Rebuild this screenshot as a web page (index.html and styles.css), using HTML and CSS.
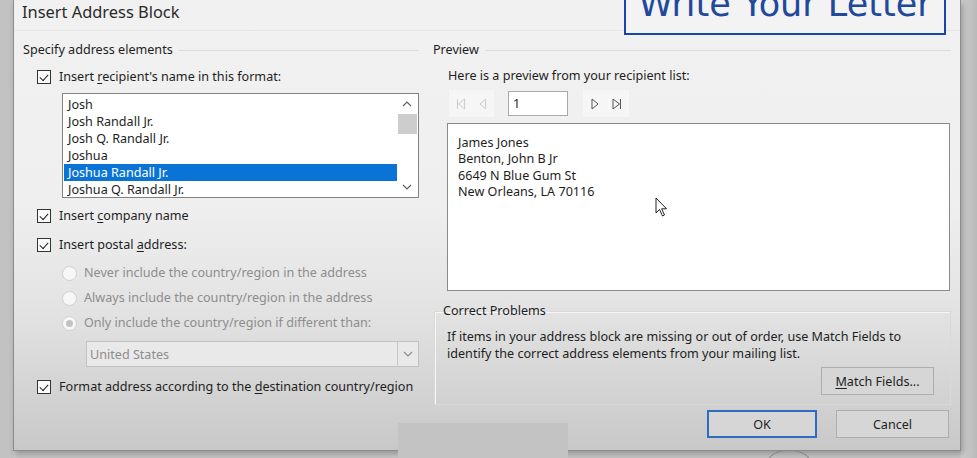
FILE: index.html
```html
<!DOCTYPE html>
<html lang="en">

<head>
    <meta charset="UTF-8">
    <meta name="viewport" content="width=device-width, initial-scale=1.0">
    <title>Insert Address Block</title>
    <link rel="stylesheet" href="styles.css">
</head>

<body>
    <div class="screen">

        <!-- Dialog -->
        <div class="dialog">
            <div class="titlebar">Insert Address Block</div>

            <div class="content">
                <!-- Linkerkolom -->
                <div class="col-left">
                    <div class="legend"><span>Specify address elements</span></div>

                    <div class="check row-name">
                        <span class="box checked"></span>
                        <span>Insert <u>r</u>ecipient's name in this format:</span>
                    </div>

                    <div class="listbox">
                        <div class="items">
                            <div class="item">Josh</div>
                            <div class="item">Josh Randall Jr.</div>
                            <div class="item">Josh Q. Randall Jr.</div>
                            <div class="item">Joshua</div>
                            <div class="item selected">Joshua Randall Jr.</div>
                            <div class="item">Joshua Q. Randall Jr.</div>
                        </div>
                        <div class="scrollbar">
                            <svg width="12" height="8" viewBox="0 0 12 8"><path d="M2 6 L6 2 L10 6" fill="none" stroke="#606060" stroke-width="1.2"/></svg>
                            <div class="thumb"></div>
                            <div class="spacer"></div>
                            <svg width="12" height="8" viewBox="0 0 12 8"><path d="M2 2 L6 6 L10 2" fill="none" stroke="#606060" stroke-width="1.2"/></svg>
                        </div>
                    </div>

                    <div class="check row-company">
                        <span class="box checked"></span>
                        <span>Insert <u>c</u>ompany name</span>
                    </div>

                    <div class="check row-postal">
                        <span class="box checked"></span>
                        <span>Insert postal <u>a</u>ddress:</span>
                    </div>

                    <div class="radio row-r1">
                        <span class="dot"></span>
                        <span>Never include the country/region in the address</span>
                    </div>
                    <div class="radio row-r2">
                        <span class="dot"></span>
                        <span>Always include the country/region in the address</span>
                    </div>
                    <div class="radio row-r3">
                        <span class="dot on"></span>
                        <span>Only include the country/region if different than:</span>
                    </div>

                    <div class="dropdown">
                        <span class="value">United States</span>
                        <span class="arrow">
                            <svg width="12" height="8" viewBox="0 0 12 8"><path d="M2 2 L6 6 L10 2" fill="none" stroke="#8a8a8a" stroke-width="1.2"/></svg>
                        </span>
                    </div>

                    <div class="check row-format">
                        <span class="box checked"></span>
                        <span>Format address according to the <u>d</u>estination country/region</span>
                    </div>
                </div>

                <!-- Rechterkolom -->
                <div class="col-right">
                    <div class="legend"><span>Preview</span></div>

                    <div class="preview-label">Here is a preview from your recipient list:</div>

                    <div class="nav">
                        <div class="nav-group disabled">
                            <svg width="14" height="16" viewBox="0 0 14 16"><path d="M3.5 3 V13 M11 3 L4.5 8 L11 13 Z" fill="none" stroke="#c9c9c9" stroke-width="1"/></svg>
                            <svg width="14" height="16" viewBox="0 0 14 16"><path d="M10 3 L4 8 L10 13 Z" fill="none" stroke="#c9c9c9" stroke-width="1"/></svg>
                        </div>
                        <div class="nav-input">1</div>
                        <div class="nav-group">
                            <svg width="14" height="16" viewBox="0 0 14 16"><path d="M4 3 L10 8 L4 13 Z" fill="none" stroke="#555" stroke-width="1"/></svg>
                            <svg width="14" height="16" viewBox="0 0 14 16"><path d="M10.5 3 V13 M3 3 L9.5 8 L3 13 Z" fill="none" stroke="#555" stroke-width="1"/></svg>
                        </div>
                    </div>

                    <div class="preview-box">
                        <div>James Jones</div>
                        <div>Benton, John B Jr</div>
                        <div>6649 N Blue Gum St</div>
                        <div>New Orleans, LA 70116</div>
                    </div>

                    <fieldset class="problems">
                        <legend>Correct Problems</legend>
                        <p>If items in your address block are missing or out of order, use Match Fields to identify the correct address elements from your mailing list.</p>
                        <div class="problems-actions">
                            <button class="btn btn-match"><u>M</u>atch Fields...</button>
                        </div>
                    </fieldset>

                    <div class="buttons">
                        <button class="btn btn-ok">OK</button>
                        <button class="btn btn-cancel">Cancel</button>
                    </div>
                </div>
            </div>
        </div>

        <!-- Titel van de video, over de dialoog heen -->
        <div class="banner">Write Your Letter</div>

        <!-- Muisaanwijzer -->
        <svg class="cursor" width="14" height="21" viewBox="0 0 14 21">
            <path d="M1 1 L1 16 L4.5 12.5 L7.5 19 L9.5 18 L6.6 11.8 L11.5 11.8 Z" fill="#fff" stroke="#222" stroke-width="1"/>
        </svg>

        <!-- Stukje achtergrond van de video -->
        <div class="video-block"></div>
        <div class="video-ring"></div>
    </div>
</body>

</html>
```

FILE: styles.css
```css
/* Basisopmaak */
body,
html {
    margin: 0;
    padding: 0;
    overflow: hidden;
    font-family: "Noto Sans", "Open Sans", sans-serif;
    font-size: 12.6px;
    color: #1e1e1e;
}

.screen {
    position: relative;
    width: 977px;
    height: 458px;
    overflow: hidden;
    background: linear-gradient(to right, #c2c2c2 0, #c2c2c2 13px, #c6c6c6 13px, #c6c6c6 960px, #cdcdcd 962px, #b9b9b9 977px);
}

u {
    text-decoration: underline;
    text-underline-offset: 2px;
}

/* Dialoogvenster */
.dialog {
    margin-left: 13px;
    width: 946px;
    height: 450px;
    border-left: 1px solid #8c8c8c;
    border-right: 1px solid #8c8c8c;
    border-bottom: 1px solid #8c8c8c;
    background: linear-gradient(to bottom, #f1f1f1 0%, #efefef 45%, #e2e2e2 70%, #c8c8c8 100%);
    box-shadow: 2px 3px 6px rgba(0, 0, 0, 0.25);
    display: flex;
    flex-direction: column;
}

.titlebar {
    height: 31px;
    padding-left: 8px;
    font-size: 16.4px;
    line-height: 24px;
    color: #2a2a2a;
    border-bottom: 1px solid #e6e6e6;
    box-sizing: border-box;
}

.content {
    display: flex;
    gap: 14px;
    padding: 11px 9px 0 9px;
}

.col-left {
    width: 396px;
    display: flex;
    flex-direction: column;
}

.col-right {
    width: 518px;
    display: flex;
    flex-direction: column;
}

/* Groepskop met lijn */
.legend {
    display: flex;
    align-items: center;
    height: 16px;
    line-height: 16px;
}

.legend::after {
    content: "";
    flex: 1;
    border-top: 1px solid #dcdcdc;
    margin-left: 6px;
}

/* Selectievakjes */
.check,
.radio {
    display: flex;
    align-items: center;
    height: 16px;
    line-height: 16px;
    white-space: nowrap;
}

.check {
    margin-left: 14px;
    gap: 8px;
}

.box {
    width: 12px;
    height: 12px;
    border: 1px solid #333;
    background: #fafafa;
    position: relative;
    flex: none;
}

.box.checked::after {
    content: "";
    position: absolute;
    left: 2px;
    top: 1px;
    width: 7px;
    height: 4px;
    border-left: 1.2px solid #222;
    border-bottom: 1.2px solid #222;
    transform: translate(0, 2px) rotate(-48deg);
    transform-origin: center;
}

.row-name {
    margin-top: 11px;
}

.row-company {
    margin-top: 10px;
}

.row-postal {
    margin-top: 13px;
}

/* Keuzerondjes (uitgeschakeld) */
.radio {
    margin-left: 39px;
    gap: 7px;
    color: #8d8d8d;
}

.dot {
    width: 13px;
    height: 13px;
    border: 1px solid #cfcfcf;
    border-radius: 50%;
    background: #f7f7f7;
    position: relative;
    flex: none;
}

.dot.on::after {
    content: "";
    position: absolute;
    left: 3px;
    top: 3px;
    width: 7px;
    height: 7px;
    border-radius: 50%;
    background: #c3c3c3;
}

.row-r1 {
    margin-top: 12px;
}

.row-r2,
.row-r3 {
    margin-top: 9px;
}

/* Lijst met naamopmaak */
.listbox {
    margin-top: 8px;
    margin-left: 39px;
    width: 357px;
    height: 105px;
    box-sizing: border-box;
    border: 1px solid #828282;
    background: #fff;
    display: flex;
    padding: 2px 1px 2px 1px;
}

.items {
    flex: 1;
}

.item {
    height: 17px;
    line-height: 17px;
    padding-left: 4px;
    white-space: nowrap;
}

.item.selected {
    background: #0a74d6;
    color: #fff;
}

.scrollbar {
    width: 20px;
    display: flex;
    flex-direction: column;
    align-items: center;
    padding-top: 4px;
    box-sizing: border-box;
}

.scrollbar .thumb {
    width: 19px;
    height: 20px;
    background: #cdcdcd;
    margin-top: 6px;
}

.scrollbar .spacer {
    flex: 1;
}

.scrollbar svg:last-child {
    margin-bottom: 4px;
}

/* Landenkeuze (uitgeschakeld) */
.dropdown {
    margin-top: 10px;
    margin-left: 63px;
    width: 333px;
    height: 26px;
    box-sizing: border-box;
    border: 1px solid #c2c2c2;
    background: #e9e9e9;
    display: flex;
    align-items: center;
    color: #8d8d8d;
}

.dropdown .value {
    flex: 1;
    padding-left: 3px;
}

.dropdown .arrow {
    width: 20px;
    height: 24px;
    border-left: 1px solid #c8c8c8;
    display: flex;
    align-items: center;
    justify-content: center;
}

.row-format {
    margin-top: 12px;
}

/* Voorbeeld */
.preview-label {
    margin-top: 10px;
    padding-left: 15px;
    height: 16px;
    line-height: 16px;
}

.nav {
    margin-top: 6px;
    padding-left: 16px;
    display: flex;
    align-items: center;
    height: 27px;
}

.nav-group {
    height: 27px;
    display: flex;
    align-items: center;
    gap: 8px;
    padding: 0 5px 0 5px;
    background: #f6f6f6;
}

.nav-group.disabled {
    width: 35px;
}

.nav-input {
    margin: 0 15px 0 14px;
    width: 60px;
    height: 25px;
    box-sizing: border-box;
    border: 1px solid #a9a9a9;
    background: #fff;
    line-height: 23px;
    padding-left: 4px;
}

.preview-box {
    margin-top: 6px;
    margin-left: 14px;
    width: 503px;
    height: 168px;
    box-sizing: border-box;
    border: 1px solid #8a8a8a;
    background: #fff;
    padding: 11px 0 0 10px;
    line-height: 16.4px;
}

/* Problemen oplossen */
.problems {
    margin: 12px 0 0 1px;
    width: 517px;
    height: 102px;
    box-sizing: border-box;
    border: 1px solid #d9d9d9;
    box-shadow: inset 1px 1px 0 #f6f6f6;
    padding: 0 16px 0 12px;
}

.problems legend {
    padding: 0 3px 0 0;
    margin-left: -4px;
    line-height: 16px;
}

.problems p {
    margin: 9px 0 0 0;
    line-height: 17px;
}

.problems-actions {
    display: flex;
    justify-content: flex-end;
    margin-top: 5px;
}

/* Knoppen */
.btn {
    font-family: inherit;
    font-size: 12.6px;
    color: #1e1e1e;
    height: 28px;
    box-sizing: border-box;
    border: 1px solid #adadad;
    background: #d6d6d6;
    padding: 0;
}

.btn-match {
    width: 113px;
}

.buttons {
    display: flex;
    justify-content: flex-end;
    gap: 19px;
    margin-top: 5px;
    padding-right: 2px;
}

.btn-ok {
    width: 110px;
    border: 2px solid #2f6cc0;
}

.btn-cancel {
    width: 113px;
}

/* Videotitel */
.banner {
    position: absolute;
    left: 624px;
    top: -14px;
    width: 318px;
    height: 45px;
    border: 2px solid #1847a3;
    background: #f3f3f3;
    color: #21499b;
    font-family: "DejaVu Sans", sans-serif;
    font-size: 35px;
    line-height: 32px;
    text-align: center;
    white-space: nowrap;
}

.cursor {
    position: absolute;
    left: 655px;
    top: 197px;
}

.video-block {
    position: absolute;
    left: 398px;
    top: 423px;
    width: 170px;
    height: 35px;
    background: #c3c3c3;
}

.video-ring {
    position: absolute;
    left: 768px;
    top: 450px;
    width: 40px;
    height: 20px;
    border: 1px solid #888;
    border-radius: 50%;
}
```
